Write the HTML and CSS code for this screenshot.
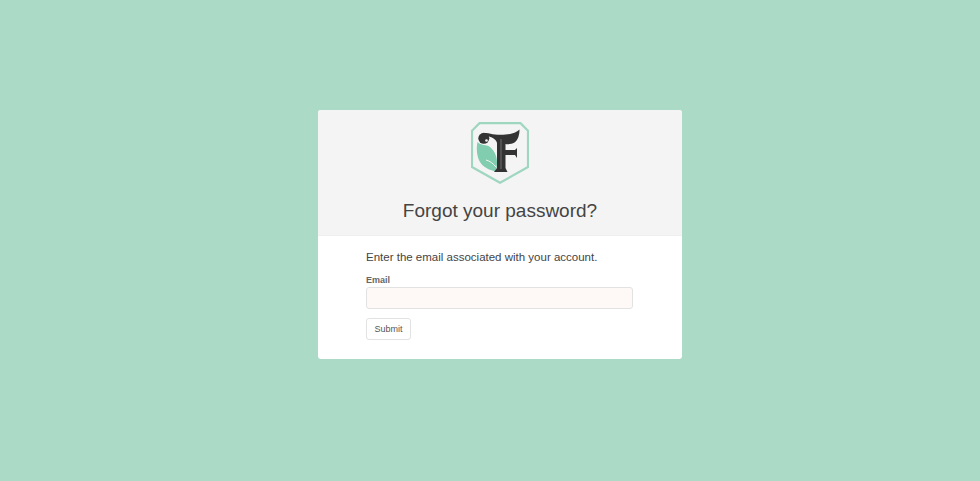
FILE: index.html
```html
<!DOCTYPE html>
<html lang="en">

<head>
    <meta charset="UTF-8">
    <meta name="viewport" content="width=device-width, initial-scale=1.0">
    <title>Forgot your password?</title>
    <link rel="stylesheet" href="styles.css">
</head>

<body>
    <div class="card">
        <div class="cardheader">
            <svg class="logo" viewBox="0 0 58 62" width="58" height="62" role="img" aria-label="Logo">
                <path d="M8.500 1.200H49.500L57 8.700V45L29 60.800L1 45V8.700Z" fill="#f4f4f4" stroke="#9fd6c0" stroke-width="2.200"/>
                <path d="M6.500 20C10 24 15 22 19 25C24 29 26.500 36 26 42C25.800 45 25.300 47 24.500 49.500C18 48 12 45 9 40C6 35 5 27 6.500 20Z" fill="#80cdb0"/>
                <path d="M15 38C19 39 22 41.500 25 45" fill="none" stroke="#f4f4f4" stroke-width="1"/>
                <circle cx="12.800" cy="16.300" r="5.500" fill="#333"/>
                <circle cx="15.500" cy="18.500" r="1.300" fill="#f4f4f4"/>
                <path d="M13 11C18 10.500 20 12 24 12.500C32 13 40 12.500 44 10.500C46 9.500 47.500 8.500 48.500 7.500C48.500 13 47 18 43.500 20.500C41 22 37 22.500 34.500 22V28H44L46 26V36L44 33H34.500V46L36.500 50H23L26 46V21C25.500 18 22 15.500 18 14.500C16 14 14.500 14 13 14Z" fill="#333"/>
                <path d="M30 17V47" stroke="#8a8a8a" stroke-width="0.700"/>
            </svg>
            <h1>Forgot your password?</h1>
        </div>
        <div class="cardbody">
            <p class="intro">Enter the email associated with your account.</p>
            <form>
                <label class="fieldlabel" for="email">Email</label>
                <input type="email" id="email" name="email">
                <button type="submit" class="submitbutton">Submit</button>
            </form>
        </div>
    </div>
</body>

</html>
```

FILE: styles.css
```css
body {
    font-family: "Liberation Sans", Arial, sans-serif;
    height: 100vh;
    margin: 0;
    background-color: #abdac7;
    color: #444;
    overflow: hidden;
}

.card {
    width: 364px;
    height: 249px;
    margin: 110px 0 0 318px;
    background-color: #fff;
    border-radius: 3px;
    overflow: hidden;
}

.cardheader {
    display: flex;
    flex-direction: column;
    align-items: center;
    box-sizing: border-box;
    height: 126px;
    padding-top: 12px;
    background-color: #f4f4f4;
    border-bottom: 1px solid #eee;
}

.logo {
    display: block;
}

.cardheader h1 {
    margin: 15px 0 0 0;
    font-size: 19px;
    line-height: 24px;
    font-weight: 400;
}

.cardbody {
    padding: 13px 48px 0 48px;
}

.intro {
    margin: 0 0 10px 0;
    font-size: 11.5px;
    line-height: 16px;
}

.fieldlabel {
    display: block;
    font-size: 9px;
    line-height: 10px;
    font-weight: 700;
    color: #666;
}

input[type="email"] {
    display: block;
    width: 267px;
    height: 22px;
    margin: 2px 0 9px 0;
    padding: 0;
    box-sizing: border-box;
    background-color: #fef9f7;
    border: 1px solid #e2e2e2;
    border-radius: 3px;
}

.submitbutton {
    display: block;
    width: 45px;
    height: 22px;
    padding: 0;
    font-family: inherit;
    font-size: 9px;
    color: #555;
    background-color: #fff;
    border: 1px solid #e2e2e2;
    border-radius: 3px;
}
```
